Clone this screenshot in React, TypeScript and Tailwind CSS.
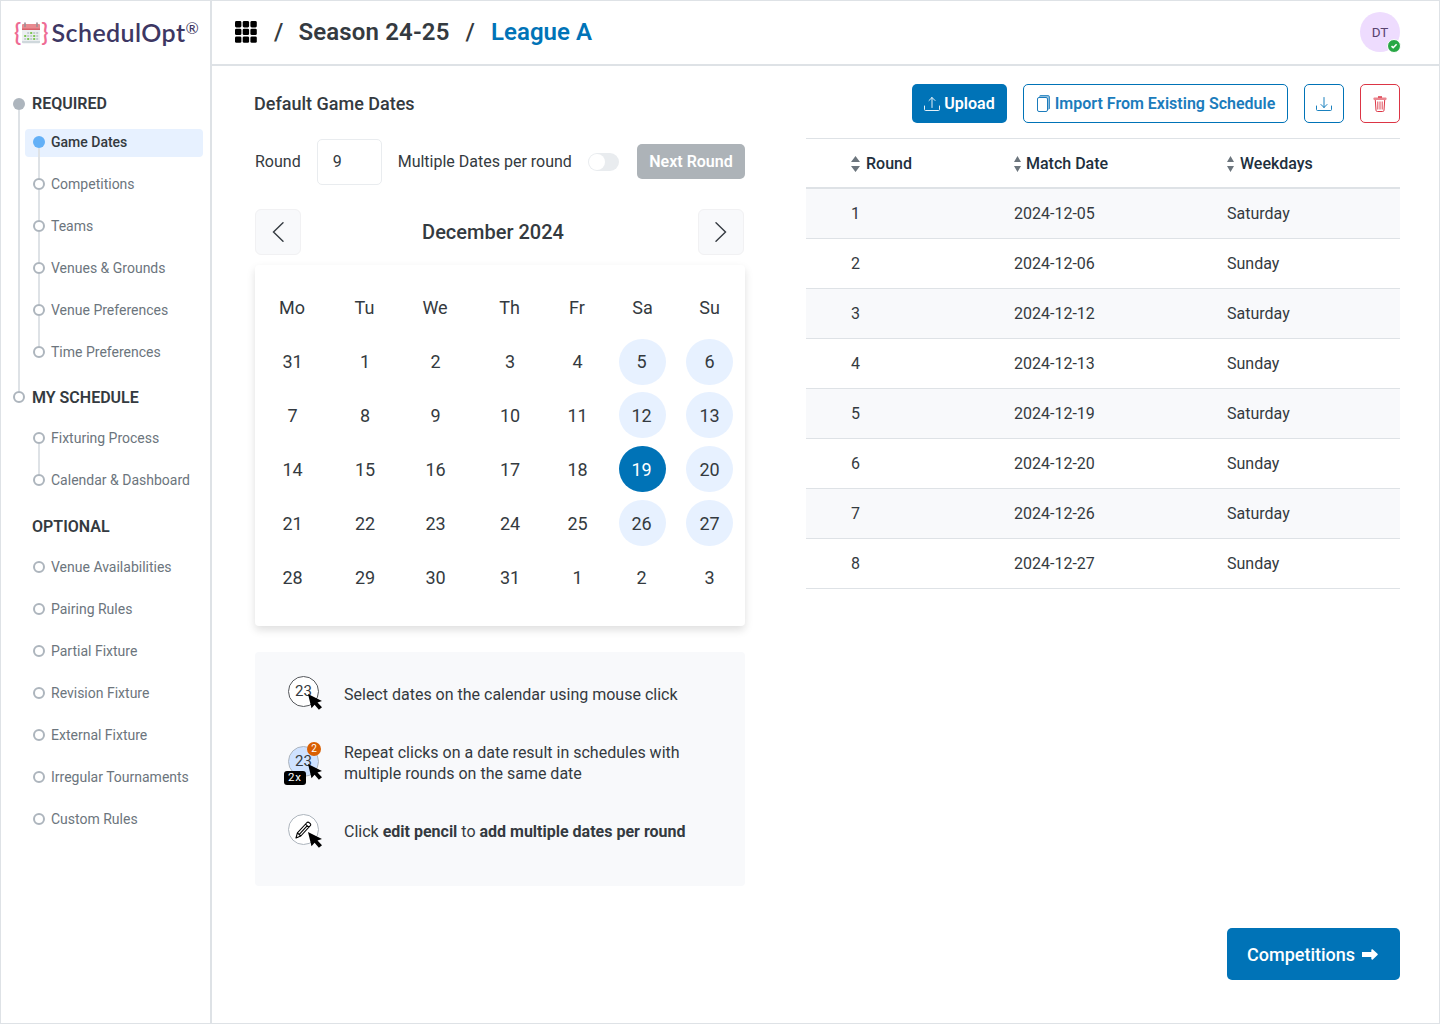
import { useState } from 'react';
import type { ReactNode } from 'react';
import { clsx } from 'clsx';

const requiredSteps = [
    'Game Dates',
    'Competitions',
    'Teams',
    'Venues & Grounds',
    'Venue Preferences',
    'Time Preferences',
];

const scheduleSteps = ['Fixturing Process', 'Calendar & Dashboard'];

const optionalSteps = [
    'Venue Availabilities',
    'Pairing Rules',
    'Partial Fixture',
    'Revision Fixture',
    'External Fixture',
    'Irregular Tournaments',
    'Custom Rules',
];

const weekdays = ['Mo', 'Tu', 'We', 'Th', 'Fr', 'Sa', 'Su'];

const weeks = [
    [31, 1, 2, 3, 4, 5, 6],
    [7, 8, 9, 10, 11, 12, 13],
    [14, 15, 16, 17, 18, 19, 20],
    [21, 22, 23, 24, 25, 26, 27],
    [28, 29, 30, 31, 1, 2, 3],
];

const rounds = [
    { round: 1, date: '2024-12-05', weekday: 'Saturday' },
    { round: 2, date: '2024-12-06', weekday: 'Sunday' },
    { round: 3, date: '2024-12-12', weekday: 'Saturday' },
    { round: 4, date: '2024-12-13', weekday: 'Sunday' },
    { round: 5, date: '2024-12-19', weekday: 'Saturday' },
    { round: 6, date: '2024-12-20', weekday: 'Sunday' },
    { round: 7, date: '2024-12-26', weekday: 'Saturday' },
    { round: 8, date: '2024-12-27', weekday: 'Sunday' },
];

const CalendarLogo = () => (
    <svg width="20" height="22" viewBox="0 0 20 22" preserveAspectRatio="none">
        <rect x="1" y="3" width="18" height="18" rx="1" fill="#eceff1" />
        <path d="M1 19h18v1.2a1 1 0 0 1-1 1H2a1 1 0 0 1-1-1z" fill="#cfd8dc" />
        <path d="M2 2h16a1 1 0 0 1 1 1v5H1V3a1 1 0 0 1 1-1z" fill="#e88a8f" />
        <path d="M1 6.5h18V8H1z" fill="#d9606a" />
        <path d="M4 1v3.500M16 1v3.500" stroke="#9c8f94" strokeWidth="1.6" strokeLinecap="round" />
        <g fill="#c3ccd1">
            <path d="M6.2 10h2v2h-2zM12.2 10h2v2h-2zM15.2 10h2v2h-2zM6.2 13h2v2h-2zM9.2 13h2v2h-2zM15.2 13h2v2h-2zM3.2 16h2v2h-2zM9.2 16h2v2h-2zM15.2 16h2v2h-2z" />
        </g>
        <g fill="#7cc653">
            <path d="M9.2 10h2v2h-2zM3.2 13h2v2h-2zM12.2 13h2v2h-2zM6.2 16h2v2h-2zM12.2 16h2v2h-2z" />
        </g>
    </svg>
);

const Logo = () => (
    <div className="flex h-[66px] items-center pb-0.5 pl-[13px] font-['Lato',sans-serif]">
        <span className="-mt-[3px] text-2xl leading-none font-semibold text-[#ee6b94]">{'{'}</span>
        <CalendarLogo />
        <span className="-mt-[3px] text-2xl leading-none font-semibold text-[#ee6b94]">{'}'}</span>
        <span className="-mt-px ml-[3px] text-[25px] leading-none font-semibold tracking-[0.4px] text-[#3d3763]">SchedulOpt</span>
        <span className="-mt-2.5 text-base leading-none text-[#3d3763]">®</span>
    </div>
);

const Dot = ({ state }: { state: 'open' | 'active' | 'done' }) => (
    <span
        className={clsx(
            'size-3 shrink-0 rounded-full',
            state === 'open' && 'border-2 border-[#adb5bd] bg-white',
            state === 'active' && 'bg-[#63b0f7]',
            state === 'done' && 'bg-[#adb5bd]'
        )}
    />
);

interface StepListProps {
    steps: string[];
    active?: string;
    connected?: boolean;
}

const StepList = ({ steps, active, connected = false }: StepListProps) => (
    <ul>
        {steps.map((step, index) => {
            const isActive = step === active;
            const last = index === steps.length - 1;
            return (
                <li key={step} className="relative flex h-[42px] items-center">
                    {isActive && <span className="absolute top-2 -left-2 h-7 w-[178px] rounded bg-[#e7f1ff]" />}
                    <span className="relative flex h-full w-3 flex-col items-center">
                        <span className={clsx('w-0.5 flex-1', connected && index > 0 && 'bg-[#dee2e6]')} />
                        <Dot state={isActive ? 'active' : 'open'} />
                        <span className={clsx('w-0.5 flex-1', connected && !last && 'bg-[#dee2e6]')} />
                    </span>
                    <a
                        href="#"
                        className={clsx(
                            'relative ml-1.5 text-sm whitespace-nowrap',
                            isActive ? 'font-medium text-[#343a40]' : 'text-[#6c757d]'
                        )}
                    >
                        {step}
                    </a>
                </li>
            );
        })}
    </ul>
);

const Sidebar = () => (
    <aside className="w-[211px] shrink-0 border-r-2 border-[#dee2e6]">
        <Logo />
        <nav className="pt-[31px] pl-3">
            <div className="flex h-[293px] gap-[7px]">
                <div className="flex flex-col items-center">
                    <Dot state="done" />
                    <span className="w-0.5 flex-1 bg-[#dee2e6]" />
                </div>
                <div>
                    <h2 className="h-[23px] text-base leading-[12px] font-semibold text-[#343a40]">REQUIRED</h2>
                    <div className="pl-px">
                        <StepList steps={requiredSteps} active="Game Dates" connected />
                    </div>
                </div>
            </div>
            <div className="flex gap-[7px]">
                <Dot state="open" />
                <div>
                    <h2 className="h-[26px] text-base leading-[14px] font-semibold text-[#343a40]">MY SCHEDULE</h2>
                    <div className="pl-px">
                        <StepList steps={scheduleSteps} connected />
                    </div>
                </div>
            </div>
            <div className="pt-[19px] pl-[19px]">
                <h2 className="h-[26px] text-base leading-[14px] font-semibold text-[#343a40]">OPTIONAL</h2>
                <div className="pl-px">
                    <StepList steps={optionalSteps} />
                </div>
            </div>
        </nav>
    </aside>
);

const GridIcon = () => (
    <svg width="22" height="22" viewBox="0 0 22 22">
        {[0, 7.7, 15.4].map((y) =>
            [0, 7.7, 15.4].map((x) => <rect key={`${x}-${y}`} x={x} y={y} width="6.4" height="6.4" rx="1.4" />)
        )}
    </svg>
);

const Header = () => (
    <header className="flex h-[65px] items-center justify-between border-b-2 border-[#dee2e6] pr-[39px] pb-0.5 pl-[23px]">
        <div className="flex items-center text-2xl font-semibold text-[#343a40]">
            <GridIcon />
            <span className="ml-[17px] font-medium">/</span>
            <span className="ml-[15px] tracking-[0.15px]">Season 24-25</span>
            <span className="ml-4 font-medium">/</span>
            <span className="ml-4 tracking-[0.05px] text-[#0073b7]">League A</span>
        </div>
        <div className="relative flex size-10 items-center justify-center rounded-full bg-[#eedcfe] pt-0.5 text-[13.5px] text-[#59436f]">
            DT
            <span className="absolute -right-px -bottom-px flex size-[14px] items-center justify-center rounded-full border border-white bg-[#28a745]">
                <svg width="8" height="8" viewBox="0 0 8 8" fill="none" stroke="#fff" strokeWidth="1.6">
                    <path d="M1.5 4.2 3.2 5.7 6.6 2.3" />
                </svg>
            </span>
        </div>
    </header>
);

const UploadIcon = () => (
    <svg width="16" height="16" viewBox="0 0 16 16" fill="none" stroke="currentColor" strokeWidth=".9" strokeLinecap="round" strokeLinejoin="round">
        <path d="M.5 10v3.5a1 1 0 0 0 1 1h13a1 1 0 0 0 1-1V10M8 11.5V1.5M5 4.5l3-3 3 3" />
    </svg>
);

const DownloadIcon = () => (
    <svg width="16" height="16" viewBox="0 0 16 16" fill="none" stroke="currentColor" strokeWidth=".9" strokeLinecap="round" strokeLinejoin="round">
        <path d="M.5 10v3.5a1 1 0 0 0 1 1h13a1 1 0 0 0 1-1V10M8 1.500v10M5 8.5l3 3 3-3" />
    </svg>
);

const CopyIcon = () => (
    <svg width="13" height="17" viewBox="0 0 13 17" fill="none" stroke="currentColor">
        <path d="M2.500 1.500h8a1 1 0 0 1 1 1v11.500" strokeWidth="2" opacity=".5" />
        <rect x=".5" y="2.5" width="10" height="14" rx="1.500" />
        <path d="M2.500 1.500A1.500 1.500 0 0 1 4 .5h7A1.500 1.500 0 0 1 12.500 2v11a1.500 1.500 0 0 1-1 1.400" strokeWidth=".8" />
    </svg>
);

const TrashIcon = () => (
    <svg width="14" height="16" viewBox="0 0 14 16" fill="none" stroke="currentColor">
        <path d="M5 1h4" strokeWidth="1.500" />
        <rect x=".5" y="1.500" width="13" height="2.500" rx=".8" fill="currentColor" stroke="none" opacity=".6" />
        <path d="M2.300 4l.7 10.300a1.300 1.300 0 0 0 1.300 1.200h5.400a1.300 1.300 0 0 0 1.300-1.200L11.700 4" />
        <path d="M4.800 5.500v8M7 5.500v8M9.200 5.500v8" strokeWidth=".9" />
    </svg>
);

const CursorIcon = () => (
    <svg width="15" height="16" viewBox="0 0 15 17" preserveAspectRatio="none">
        <path d="M0 0l14 7.400-4.500 1.700 4.500 5.100-3.100 2.600-4.300-5.300-3.100 3.700z" fill="#000" />
    </svg>
);

const PencilIcon = () => (
    <svg width="17" height="18" viewBox="0 0 17 18" fill="none" stroke="#000" strokeWidth="1.100" strokeLinejoin="round">
        <path d="M1 17l1.400-5.200L12 1.500a1.400 1.400 0 0 1 2 0l1.300 1.200a1.400 1.400 0 0 1 0 2L5.800 15zM2.400 11.800L5.800 15M10.500 3.200l3.400 3.200M4.300 13.300l7.800-8.400" />
    </svg>
);

const SortIcon = ({ width }: { width: number }) => (
    <svg width={width} height="16" viewBox="0 0 10 16" preserveAspectRatio="none" fill="#6c757d">
        <path d="M5 0l5 6H0zM5 16l5-6H0z" />
    </svg>
);

const Chevron = ({ direction }: { direction: 'left' | 'right' }) => (
    <button className="flex size-[46px] items-center justify-center rounded-md border border-[#f1f1f3] bg-[#f8f9fb]">
        <svg width="12" height="20" viewBox="0 0 12 20" fill="none" stroke="#343a40" strokeWidth="1.400" strokeLinecap="round">
            <path d={direction === 'left' ? 'M11 .8L1.500 10l9.500 9.200' : 'M1 .8l9.500 9.200L1 19.200'} />
        </svg>
    </button>
);

const Calendar = () => {
    const [selected] = useState(19);

    return (
        <div className="mt-2.5 h-[361px] rounded bg-white pt-4 pl-px shadow-[0_4px_8px_rgba(0,0,0,0.13)]">
            <div className="grid grid-cols-[72px_73px_68px_81px_54px_77px_57px] text-lg text-[#343a40]">
                {weekdays.map((day) => (
                    <div key={day} className="flex h-[54px] items-center justify-center">
                        {day}
                    </div>
                ))}
                {weeks.map((week, row) =>
                    week.map((day, col) => {
                        const weekend = col > 4 && row < 4;
                        return (
                            <div key={`${row}-${col}`} className="flex h-[54px] items-center justify-center">
                                <span
                                    className={clsx(
                                        'flex h-[46px] w-[47px] shrink-0 items-center justify-center rounded-full',
                                        col < 5 && 'pl-px',
                                        col === 5 && 'pr-0.5',
                                        weekend && row > 0 && '-mt-0.5 pt-0.5',
                                        weekend && day !== selected && 'bg-[#e7f1ff]',
                                        weekend && day === selected && 'bg-[#0073b7] text-white'
                                    )}
                                >
                                    {day}
                                </span>
                            </div>
                        );
                    })
                )}
            </div>
        </div>
    );
};

const HintIcon = ({ children, className }: { children: ReactNode; className: string }) => (
    <span className={clsx('relative flex size-[31px] shrink-0 items-center justify-center rounded-full border', className)}>
        {children}
        <span className="absolute top-[17px] left-[19px]">
            <CursorIcon />
        </span>
    </span>
);

const Hints = () => (
    <div className="mt-[26px] h-[234px] rounded bg-[#f8f9fb] pl-[33px] text-base leading-[21px] text-[#343a40]">
        <div className="flex pt-6">
            <HintIcon className="border-[#55585c] bg-white text-[15px]">23</HintIcon>
            <p className="mt-2 ml-[25px]">Select dates on the calendar using mouse click</p>
        </div>
        <div className="flex pt-[37px]">
            <div className="mt-[2px]">
                <HintIcon className="border-[#adb5bd] bg-[#cfe2ff] text-[15px]">
                    23
                    <span className="absolute -top-[5px] left-[18px] flex size-[14px] items-center justify-center rounded-full bg-[#d95f02] text-[10px] leading-none text-white">
                        2
                    </span>
                    <span className="absolute top-[24px] -left-[5px] flex h-[14px] w-[22px] items-center justify-center rounded-[3px] bg-black text-[11.5px] leading-none tracking-[1px] text-white">
                        2x
                    </span>
                </HintIcon>
            </div>
            <p className="-mt-[2px] ml-[25px]">
                Repeat clicks on a date result in schedules with
                <br />
                multiple rounds on the same date
            </p>
        </div>
        <div className="flex pt-[30px]">
            <HintIcon className="border-[#adb5bd] bg-white">
                <PencilIcon />
            </HintIcon>
            <p className="mt-[7px] ml-[25px]">
                Click <b className="font-bold">edit pencil</b> to <b className="font-bold">add multiple dates per round</b>
            </p>
        </div>
    </div>
);

const GameDates = () => (
    <section className="w-[491px] pt-[27px]">
        <h1 className="text-lg leading-[22px] font-medium text-[#343a40]">Default Game Dates</h1>
        <div className="mt-6 flex h-[46px] items-center pl-px text-base text-[#343a40]">
            <span>Round</span>
            <span className="ml-4 flex h-[46px] w-[65px] items-center rounded-[5px] border border-[#e9ecef] pl-[15px]">9</span>
            <span className="ml-4">Multiple Dates per round</span>
            <span className="ml-4 flex h-[18px] w-[31px] items-center rounded-full bg-[#e9ecef] p-px">
                <span className="size-4 rounded-full bg-white" />
            </span>
            <button className="mb-px ml-auto h-[35px] w-[108px] rounded-[5px] bg-[#adb3b8] font-semibold text-white">Next Round</button>
        </div>
        <div className="pl-px">
            <div className="mt-6 flex items-center justify-between pr-px">
                <Chevron direction="left" />
                <span className="-ml-[13px] text-xl font-medium text-[#343a40]">December 2024</span>
                <Chevron direction="right" />
            </div>
            <Calendar />
            <Hints />
        </div>
    </section>
);

const RoundsTable = () => (
    <table className="mt-[15px] w-full table-fixed border-t border-[#dee2e6] text-left text-base text-[#343a40]">
        <colgroup>
            <col className="w-[208px]" />
            <col className="w-[213px]" />
            <col />
        </colgroup>
        <thead>
            <tr className="h-[49px] border-b-2 border-[#dee2e6] text-[#212f3d]">
                <th className="p-0 pt-0.5 pl-[45px] font-medium">
                    <span className="flex items-center gap-1.5">
                        <SortIcon width={9} />
                        Round
                    </span>
                </th>
                <th className="p-0 pt-0.5 font-medium">
                    <span className="flex items-center gap-[5px]">
                        <SortIcon width={7} />
                        Match Date
                    </span>
                </th>
                <th className="p-0 pt-0.5 font-medium">
                    <span className="flex items-center gap-1.5">
                        <SortIcon width={7} />
                        Weekdays
                    </span>
                </th>
            </tr>
        </thead>
        <tbody className="[&>tr:first-child>td]:pt-px">
            {rounds.map((item) => (
                <tr key={item.round} className="h-[50px] border-b border-[#dee2e6] first:h-[51px] odd:bg-[#f8f9fb]">
                    <td className="p-0 pl-[45px]">{item.round}</td>
                    <td className="p-0">{item.date}</td>
                    <td className="p-0">{item.weekday}</td>
                </tr>
            ))}
        </tbody>
    </table>
);

const Schedule = () => (
    <section className="flex w-[594px] flex-col pt-[18px]">
        <div className="flex h-[39px] justify-end gap-4 text-base font-semibold">
            <button className="flex w-[95px] items-center justify-center gap-1 rounded-[5px] bg-[#0073b7] text-white">
                <UploadIcon />
                Upload
            </button>
            <button className="flex w-[265px] items-center justify-center gap-[5px] rounded-[5px] border border-[#0073b7] pl-px text-[#1b7cbc]">
                <CopyIcon />
                Import From Existing Schedule
            </button>
            <button className="flex w-10 items-center justify-center rounded-[5px] border border-[#0073b7] text-[#0073b7]">
                <DownloadIcon />
            </button>
            <button className="flex w-10 items-center justify-center rounded-[5px] border border-[#dc3545] text-[#dc3545]">
                <TrashIcon />
            </button>
        </div>
        <RoundsTable />
        <button className="mt-auto mb-[43px] flex h-[52px] w-[173px] items-center gap-[7px] self-end rounded-[5px] bg-[#0073b7] pt-px pl-5 text-lg font-medium text-white">
            Competitions
            <svg width="16" height="11" viewBox="0 0 16 11" fill="currentColor">
                <path d="M0 3h9.300V1.300c0-1 .8-1.500 1.500-.8l4.700 4.200c.4.400.4 1 0 1.400l-4.700 4.300c-.7.600-1.500.2-1.500-.8V8H0z" />
            </svg>
        </button>
    </section>
);

export default function App() {
    return (
        <div className="flex h-[1024px] w-[1440px] overflow-hidden border border-[#dee2e6] bg-white font-['Roboto',sans-serif]">
            <Sidebar />
            <div className="flex flex-1 flex-col">
                <Header />
                <main className="flex flex-1 justify-between pr-[39px] pl-[42px]">
                    <GameDates />
                    <Schedule />
                </main>
            </div>
        </div>
    );
}
